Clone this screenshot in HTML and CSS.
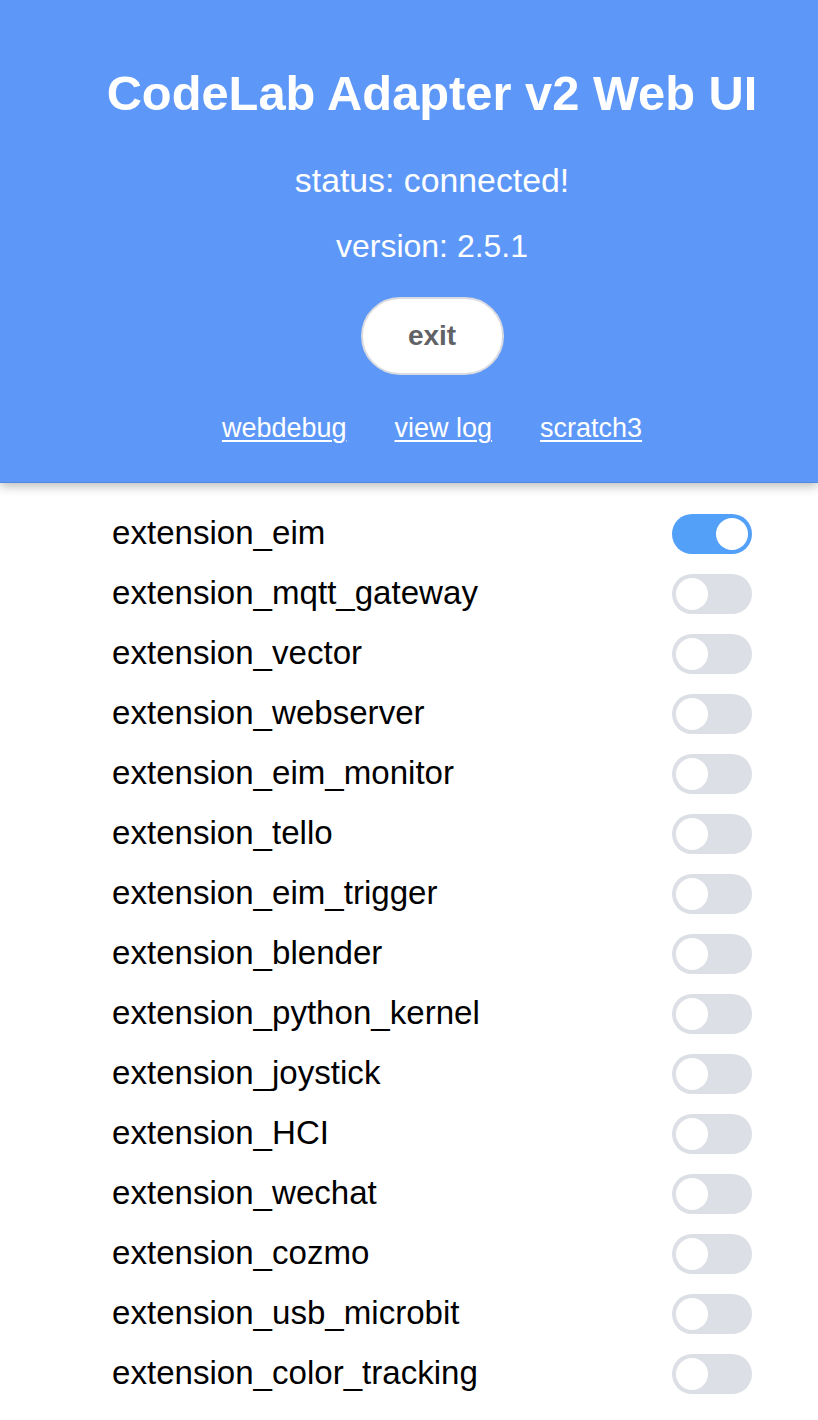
FILE: index.html
```html
<!DOCTYPE html>
<html>
<head>
<meta charset="utf-8">
<link rel="stylesheet" href="styles.css">
</head>
<body>
<header class="header">
  <div class="header-inner">
    <h1 class="title">CodeLab Adapter v2 Web UI</h1>
    <p class="info status">status: connected!</p>
    <p class="info version">version: 2.5.1</p>
    <button class="exit">exit</button>
    <nav class="links">
      <a href="#">webdebug</a>
      <a href="#">view log</a>
      <a href="#">scratch3</a>
    </nav>
  </div>
</header>
<main class="list">
  <div class="row"><span class="name">extension_eim</span><span class="switch on"><span class="knob"></span></span></div>
  <div class="row"><span class="name">extension_mqtt_gateway</span><span class="switch"><span class="knob"></span></span></div>
  <div class="row"><span class="name">extension_vector</span><span class="switch"><span class="knob"></span></span></div>
  <div class="row"><span class="name">extension_webserver</span><span class="switch"><span class="knob"></span></span></div>
  <div class="row"><span class="name">extension_eim_monitor</span><span class="switch"><span class="knob"></span></span></div>
  <div class="row"><span class="name">extension_tello</span><span class="switch"><span class="knob"></span></span></div>
  <div class="row"><span class="name">extension_eim_trigger</span><span class="switch"><span class="knob"></span></span></div>
  <div class="row"><span class="name">extension_blender</span><span class="switch"><span class="knob"></span></span></div>
  <div class="row"><span class="name">extension_python_kernel</span><span class="switch"><span class="knob"></span></span></div>
  <div class="row"><span class="name">extension_joystick</span><span class="switch"><span class="knob"></span></span></div>
  <div class="row"><span class="name">extension_HCI</span><span class="switch"><span class="knob"></span></span></div>
  <div class="row"><span class="name">extension_wechat</span><span class="switch"><span class="knob"></span></span></div>
  <div class="row"><span class="name">extension_cozmo</span><span class="switch"><span class="knob"></span></span></div>
  <div class="row"><span class="name">extension_usb_microbit</span><span class="switch"><span class="knob"></span></span></div>
  <div class="row"><span class="name">extension_color_tracking</span><span class="switch"><span class="knob"></span></span></div>
</main>
</body>
</html>
```

FILE: styles.css
```css
html, body {
  margin: 0;
  padding: 0;
  background: #ffffff;
  font-family: "Liberation Sans", Arial, sans-serif;
  overflow: hidden;
}

.header {
  background: #5d98f9;
  border-bottom: 1px solid #5189e3;
  box-shadow: 0 3px 10px rgba(0, 0, 0, 0.28);
  padding: 63px 0 37px 46px;
  position: relative;
  z-index: 1;
}

.header-inner {
  display: flex;
  flex-direction: column;
  align-items: center;
  color: #ffffff;
}

.title {
  margin: 0;
  font-size: 48.8px;
  line-height: 60px;
  font-weight: bold;
}

.info {
  margin: 37px 0 0;
  font-size: 32px;
  line-height: 40px;
}

.info.status {
  font-size: 33.8px;
}

.info.version {
  margin-top: 26px;
}

.exit {
  margin-top: 31px;
  width: 143px;
  height: 78px;
  border-radius: 39px;
  border: 2px solid #d9dbe0;
  background: #ffffff;
  color: #606266;
  font-family: "Liberation Sans", Arial, sans-serif;
  font-size: 28px;
  font-weight: bold;
  padding: 0;
}

.links {
  margin-top: 36px;
  display: flex;
  gap: 48px;
  font-size: 27px;
  line-height: 34px;
}

.links a {
  color: #ffffff;
  text-decoration: underline;
  text-underline-offset: 3px;
  text-decoration-thickness: 2px;
}

.list {
  width: 640px;
  margin: 21px 0 0 112px;
}

.row {
  height: 60px;
  display: flex;
  align-items: center;
  justify-content: space-between;
}

.name {
  font-size: 33.1px;
  line-height: 60px;
  color: #000000;
  position: relative;
  top: -1px;
}

.switch {
  width: 80px;
  height: 40px;
  border-radius: 20px;
  background: #dcdfe6;
  display: flex;
  align-items: center;
  padding: 0 4px;
  box-sizing: border-box;
}

.switch.on {
  background: #53a0f8;
  justify-content: flex-end;
}

.knob {
  width: 32px;
  height: 32px;
  border-radius: 50%;
  background: #ffffff;
}
```
